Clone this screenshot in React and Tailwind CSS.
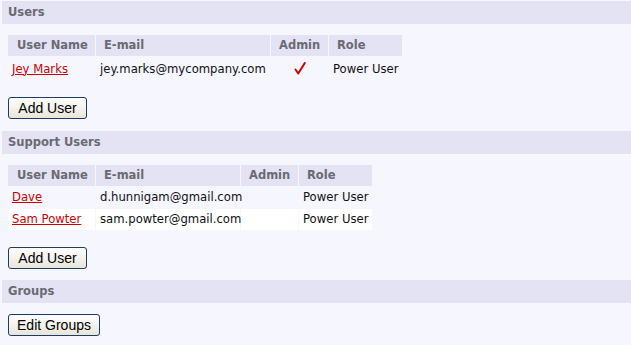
import React from "react";

const users = [
  { name: "Jey Marks", email: "jey.marks@mycompany.com", admin: true, role: "Power User" }
];

const supportUsers = [
  { name: "Dave", email: "d.hunnigam@gmail.com", admin: false, role: "Power User" },
  { name: "Sam Powter", email: "sam.powter@gmail.com", admin: false, role: "Power User" }
];

const Check = () => (
  <svg width="12" height="13" viewBox="0 0 12 13" className="inline-block align-middle">
    <path d="M1.5 7.5 L4.2 11.5 L10.8 1" fill="none" stroke="#d40000" strokeWidth="2" strokeLinecap="round" strokeLinejoin="round" />
  </svg>
);

const SectionHeader = ({ title }) => (
  <div className="h-[23px] bg-[#e3e3f3] flex items-center pl-[6px] pt-px font-bold text-[11.5px] text-[#6a6a72]">
    {title}
  </div>
);

const Button = ({ children, width }) => (
  <button
    className={`${width} h-[22px] rounded-[3px] border border-[#1e3b66] bg-gradient-to-b from-[#ffffff] to-[#e8e6da] text-[14px] text-black font-['Liberation_Sans',Arial,sans-serif] leading-none`}
  >
    {children}
  </button>
);

const UserTable = ({ rows, emailWidth, tableWidth, rowHeight }) => (
  <table className={`${tableWidth} table-fixed border-separate border-spacing-[1px]`}>
    <colgroup>
      <col className="w-[87px]" />
      <col className={emailWidth} />
      <col className="w-[57px]" />
      <col className="w-[73px]" />
    </colgroup>
    <thead>
      <tr className="h-[21px] bg-[#e3e3f3] text-left text-[11.5px] text-[#6a6a72]">
        <th className="p-0 pl-[9px] pt-px font-bold whitespace-nowrap">User Name</th>
        <th className="p-0 pl-[8px] pt-px font-bold">E-mail</th>
        <th className="p-0 pl-[8px] pt-px font-bold">Admin</th>
        <th className="p-0 pl-[8px] pt-px font-bold">Role</th>
      </tr>
    </thead>
    <tbody>
      {rows.map((u, i) => (
        <tr key={u.email} className={`${rowHeight} ${i % 2 === 1 ? "bg-white" : ""} text-[11.65px] text-[#111]`}>
          <td className="p-0 pl-[4px] pt-px whitespace-nowrap">
            <a href="#" className="text-[#cc0000] underline">{u.name}</a>
          </td>
          <td className="p-0 pl-[4px] pt-px whitespace-nowrap">{u.email}</td>
          <td className="p-0 text-center">{u.admin ? <Check /> : null}</td>
          <td className="p-0 pl-[4px] pt-px whitespace-nowrap">{u.role}</td>
        </tr>
      ))}
    </tbody>
  </table>
);

export default function App() {
  return (
    <div className="min-h-screen bg-[#f6f6fe] pt-px pl-[2px] text-[12px] font-['DejaVu_Sans',Verdana,sans-serif]">
      <SectionHeader title="Users" />
      <div className="pl-[5px] pt-[10px] pb-[12px]">
        <UserTable rows={users} emailWidth="w-[174px]" tableWidth="w-[396px]" rowHeight="h-[24px]" />
        <div className="pl-px mt-[15px]">
          <Button width="w-[79px]">Add User</Button>
        </div>
      </div>

      <SectionHeader title="Support Users" />
      <div className="pl-[5px] pt-[10px] pb-[11px]">
        <UserTable rows={supportUsers} emailWidth="w-[144px]" tableWidth="w-[366px]" rowHeight="h-[21px]" />
        <div className="pl-px mt-[16px]">
          <Button width="w-[79px]">Add User</Button>
        </div>
      </div>

      <SectionHeader title="Groups" />
      <div className="pl-[6px] pt-[11px]">
        <Button width="w-[92px]">Edit Groups</Button>
      </div>
    </div>
  );
}
